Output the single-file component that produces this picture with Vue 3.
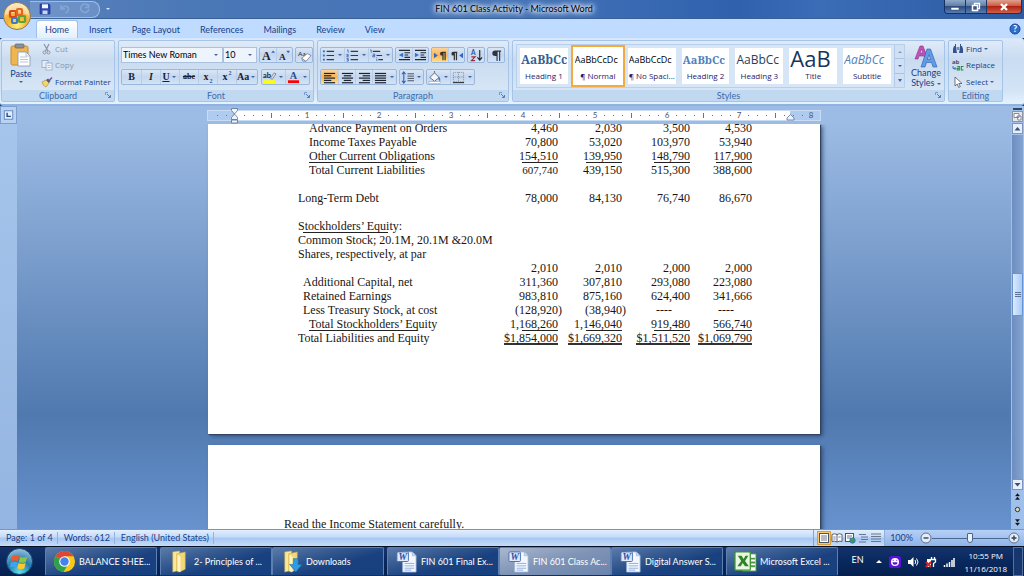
<template>
  <div class="word">
    <header class="title-bar">
      <div class="quick-access">
        <button v-for="q in quickButtons" :key="q" class="bare" :aria-label="q">
          <svg viewBox="0 0 12 12" class="ico-12" v-html="icons[q]"></svg>
        </button>
      </div>
      <button class="bare qa-more" aria-label="Customize"><i class="caret light"></i></button>
      <h1>FIN 601 Class Activity - Microsoft Word</h1>
      <div class="window-buttons">
        <button aria-label="Minimize"><svg viewBox="0 0 12 10"><rect x="2" y="5.500" width="8" height="2.500" fill="#fff" stroke="#344a6c" stroke-width=".5" /></svg></button>
        <button aria-label="Restore"><svg viewBox="0 0 12 10"><path d="M4.500 3V1.500h5v5H8" fill="none" stroke="#fff" stroke-width="1.300" /><rect x="2.500" y="3.500" width="5" height="5" fill="none" stroke="#fff" stroke-width="1.500" /></svg></button>
        <button class="close" aria-label="Close"><svg viewBox="0 0 12 10"><path d="M3 2l6 6M9 2L3 8" stroke="#fff" stroke-width="2.200" /></svg></button>
      </div>
    </header>

    <button class="office-orb" aria-label="Office">
      <svg viewBox="0 0 30 30">
        <defs>
          <radialGradient id="orb" cx=".5" cy=".85" r=".9">
            <stop offset="0" stop-color="#fff27a" />
            <stop offset=".45" stop-color="#f6ad2c" />
            <stop offset="1" stop-color="#fbe7b4" />
          </radialGradient>
        </defs>
        <circle cx="15" cy="15" r="13.500" fill="url(#orb)" stroke="#8d7a58" />
        <path d="M3 14a12 12 0 0 1 24 0q-12-5-24 0z" fill="#fff" opacity=".4" />
        <g fill="none" stroke-width="2.200">
          <rect x="8" y="10" width="6" height="6" rx="1" stroke="#d9481c" />
          <rect x="15" y="8" width="5" height="6" rx="1" stroke="#e8651f" />
          <rect x="10" y="17" width="5" height="5" rx="1" stroke="#3f79c9" />
          <rect x="17" y="15" width="6" height="6" rx="1" stroke="#5ea23a" />
        </g>
      </svg>
    </button>

    <nav class="tabs">
      <a v-for="tab in tabs" :key="tab" href="#" :class="{ active: tab === 'Home' }">{{ tab }}</a>
      <button class="bare help" aria-label="Help">
        <svg viewBox="0 0 12 12"><circle cx="6" cy="6" r="5" fill="#2f6fd0" stroke="#1d4690" /><text x="6" y="9" text-anchor="middle" font-size="9" font-weight="700" fill="#fff">?</text></svg>
      </button>
    </nav>

    <section class="ribbon">
      <div class="group clipboard">
        <div class="group-body">
          <button class="bare paste">
            <svg viewBox="0 0 22 24">
              <rect x="1" y="3" width="17" height="19" rx="1.500" fill="#efb54e" stroke="#c98c2c" />
              <rect x="5" y="1" width="9" height="4" rx="1" fill="#8a8f98" stroke="#5c6370" stroke-width=".7" />
              <path d="M8 9h8l4 4v10H8z" fill="#fff" stroke="#8795ad" stroke-width=".8" />
              <path d="M16 9v4h4M10 14h7M10 16.500h8M10 19h8" fill="none" stroke="#a9b7cc" stroke-width=".8" />
            </svg>
            Paste
            <i class="caret"></i>
          </button>
          <div class="stack">
            <button class="bare disabled"><svg viewBox="0 0 12 12" class="ico-12" v-html="icons.Cut"></svg>Cut</button>
            <button class="bare disabled"><svg viewBox="0 0 12 12" class="ico-12" v-html="icons.Copy"></svg>Copy</button>
            <button class="bare"><svg viewBox="0 0 12 12" class="ico-12" v-html="icons.Painter"></svg>Format Painter</button>
          </div>
        </div>
        <footer>Clipboard<svg class="launcher" viewBox="0 0 6 6" v-html="icons.Launcher"></svg></footer>
      </div>

      <div class="group font">
        <div class="group-body rows">
          <div class="tool-row">
            <div class="combos">
              <label class="combo wide"><select aria-label="Font"><option>Times New Roman</option><option>Calibri</option></select><i class="caret"></i></label>
              <label class="combo"><select aria-label="Font size"><option>10</option><option>12</option></select><i class="caret"></i></label>
            </div>
            <div class="tools">
              <button aria-label="Grow font"><svg viewBox="0 0 16 14" v-html="icons.Grow"></svg></button>
              <button aria-label="Shrink font"><svg viewBox="0 0 16 14" v-html="icons.Shrink"></svg></button>
            </div>
            <div class="tools">
              <button aria-label="Clear formatting"><svg viewBox="0 0 16 14" v-html="icons.Clear"></svg></button>
            </div>
          </div>
          <div class="tool-row">
            <div class="tools letters">
              <button><b>B</b></button>
              <button><em>I</em></button>
              <button class="drop"><u>U</u><i class="caret"></i></button>
              <button><s>abe</s></button>
              <button>x<sub>2</sub></button>
              <button>x<sup>2</sup></button>
              <button class="drop">Aa<i class="caret"></i></button>
            </div>
            <div class="tools">
              <button class="drop" aria-label="Highlight"><svg viewBox="0 0 16 14" v-html="icons.Highlight"></svg><i class="caret"></i></button>
              <button class="drop" aria-label="Font color"><svg viewBox="0 0 16 14" v-html="icons.Color"></svg><i class="caret"></i></button>
            </div>
          </div>
        </div>
        <footer>Font<svg class="launcher" viewBox="0 0 6 6" v-html="icons.Launcher"></svg></footer>
      </div>

      <div class="group paragraph">
        <div class="group-body rows">
          <div v-for="(row, r) in paragraphTools" :key="r" class="tool-row">
            <div v-for="(set, s) in row" :key="s" class="tools">
              <button v-for="t in set" :key="t.icon" :aria-label="t.icon" :class="{ drop: t.drop, on: t.on }">
                <svg viewBox="0 0 16 14" v-html="icons[t.icon]"></svg><i v-if="t.drop" class="caret"></i>
              </button>
            </div>
          </div>
        </div>
        <footer>Paragraph<svg class="launcher" viewBox="0 0 6 6" v-html="icons.Launcher"></svg></footer>
      </div>

      <div class="group styles">
        <div class="group-body">
          <div class="gallery">
            <button v-for="st in styleCells" :key="st.name" class="cell" :class="[st.kind, { picked: st.picked }]">
              <span class="sample">{{ st.sample }}</span>
              <span class="name">{{ st.name }}</span>
            </button>
            <div class="gallery-scroll">
              <button aria-label="Row up"><i class="caret up"></i></button>
              <button aria-label="Row down"><i class="caret"></i></button>
              <button aria-label="More"><i class="caret more"></i></button>
            </div>
          </div>
          <button class="bare change">
            <svg viewBox="0 0 24 24">
              <path d="M1 15L6 2h3l5 13h-3l-1-3H5l-1 3zM6 9h3L7.500 5z" fill="#c44fb6" stroke="#8d2f88" stroke-width=".6" />
              <path d="M7 23l6-18h3.500L23 23h-4l-1.500-4.500h-5L11 23zM13.500 15.500h3L15 10.500z" fill="#5f9be6" stroke="#2c5da8" stroke-width=".6" />
            </svg>
            <span>Change<br />Styles <i class="caret"></i></span>
          </button>
        </div>
        <footer>Styles<svg class="launcher" viewBox="0 0 6 6" v-html="icons.Launcher"></svg></footer>
      </div>

      <div class="group editing">
        <div class="group-body">
          <div class="stack">
            <button class="bare"><svg viewBox="0 0 12 12" class="ico-12" v-html="icons.Find"></svg>Find <i class="caret"></i></button>
            <button class="bare"><svg viewBox="0 0 12 12" class="ico-12" v-html="icons.Replace"></svg>Replace</button>
            <button class="bare"><svg viewBox="0 0 12 12" class="ico-12" v-html="icons.Select"></svg>Select <i class="caret"></i></button>
          </div>
        </div>
        <footer>Editing</footer>
      </div>
    </section>

    <main class="workspace">
      <div class="doc-side">
        <div class="ruler-row">
          <button class="tab-kind" aria-label="Left tab"><svg viewBox="0 0 16 16"><rect x="3.500" y="3.500" width="9" height="9" fill="#e4eefb" stroke="#5f86c0" /><path d="M6.500 5.500v4h4" fill="none" stroke="#234a86" stroke-width="1.500" /></svg></button>
          <div class="ruler">
            <svg viewBox="0 0 614 18">
              <rect x=".5" y="4.500" width="613" height="10" fill="#aecbf0" stroke="#c9dcf4" />
              <rect x="28" y="5" width="555" height="9" fill="#fff" />
              <template v-for="n in 67" :key="n">
                <rect v-if="tickAt(n) === 'half'" :x="n * 9 + 1" y="7" width="1" height="5" fill="#6b7480" />
                <rect v-else-if="tickAt(n) === 'dot'" :x="n * 9 + 1" y="9" width="1" height="1" fill="#6b7480" />
              </template>
              <text v-for="n in 8" :key="'n' + n" :x="n * 72 + 28" y="12" text-anchor="middle" font-size="8" fill="#4c5566">{{ n }}</text>
              <g fill="#eef4fd" stroke="#5c7296" stroke-width=".8">
                <path d="M24.500 2.500h6v2l-3 3.500-3-3.500z" />
                <path d="M24.500 13.500v-2l3-3.500 3 3.500v2z" />
                <path d="M24.500 14h6v3h-6z" />
                <path d="M580 14v-2l3.500-3.500L587 12v2z" />
              </g>
            </svg>
          </div>
        </div>
        <div class="canvas-row">
          <div class="side-strip"></div>
          <div class="canvas">
            <article class="page first">
              <table>
                <tbody>
                  <tr v-for="(row, i) in rows" :key="i">
                    <td :class="row.indent"><span :class="row.rule">{{ row.label }}</span></td>
                    <td v-for="(v, c) in row.values" :key="c" :class="cellClass(v)">
                      <span :class="[row.sums, { small: row.small && c === 0 }]">{{ v }}</span>
                    </td>
                  </tr>
                </tbody>
              </table>
            </article>
            <article class="page second">
              <p>Read the Income Statement carefully.</p>
            </article>
          </div>
        </div>
      </div>
      <div class="scroll-side">
        <div class="splitter"></div>
        <button aria-label="View ruler"><svg viewBox="0 0 11 11"><rect x=".5" y=".5" width="10" height="10" fill="#e6e6ee" stroke="#8b93a5" /><path d="M2 2.500h5v4H2zM5 5h4v4H6z" fill="#fff" stroke="#6a6f80" stroke-width=".8" /></svg></button>
        <button aria-label="Scroll up"><svg viewBox="0 0 11 11"><rect x=".5" y=".5" width="10" height="10" fill="#e8effa" stroke="#7e96bd" /><path d="M2.500 7.500l3-3.500 3 3.500z" fill="#3b4f78" /></svg></button>
        <div class="track"><div class="thumb"></div></div>
        <button aria-label="Scroll down"><svg viewBox="0 0 11 11"><rect x=".5" y=".5" width="10" height="10" fill="#e8effa" stroke="#7e96bd" /><path d="M2.500 4l3 3.500 3-3.500z" fill="#3b4f78" /></svg></button>
        <div class="browse">
          <button aria-label="Previous page"><svg viewBox="0 0 11 11"><path d="M3.500 5l2-2.500 2 2.500zM3.500 8.500l2-2.500 2 2.500z" fill="#111" stroke="#111" stroke-width=".4" /></svg></button>
          <button aria-label="Browse object"><svg viewBox="0 0 11 11"><circle cx="5.500" cy="5.500" r="2.200" fill="#d7d9c2" stroke="#333" /></svg></button>
          <button aria-label="Next page"><svg viewBox="0 0 11 11"><path d="M3.500 2.500l2 2.500 2-2.500zM3.500 6l2 2.500 2-2.500z" fill="#111" stroke="#111" stroke-width=".4" /></svg></button>
        </div>
      </div>
    </main>

    <div class="status-bar">
      <span>Page: 1 of 4</span>
      <span>Words: 612</span>
      <span>English (United States)</span>
      <div class="views">
        <button v-for="v in views" :key="v" class="bare" :class="{ on: v === 'PrintLayout' }" :aria-label="v">
          <svg viewBox="0 0 12 12" class="ico-12" v-html="icons[v]"></svg>
        </button>
      </div>
      <div class="zoom">
        <span id="zoom-label">100%</span>
        <button class="bare" aria-label="Zoom out"><svg viewBox="0 0 12 12" class="ico-12" v-html="icons.Minus"></svg></button>
        <input type="range" min="0" max="200" value="100" aria-labelledby="zoom-label" />
        <button class="bare" aria-label="Zoom in"><svg viewBox="0 0 12 12" class="ico-12" v-html="icons.Plus"></svg></button>
      </div>
    </div>

    <footer class="taskbar">
      <button class="bare start" aria-label="Start">
        <svg viewBox="0 0 30 30">
          <defs>
            <radialGradient id="start" cx=".5" cy=".9" r=".9">
              <stop offset="0" stop-color="#5fe0e8" />
              <stop offset=".5" stop-color="#2379ad" />
              <stop offset="1" stop-color="#9cc4de" />
            </radialGradient>
          </defs>
          <circle cx="15" cy="15" r="13.500" fill="url(#start)" stroke="#173c66" />
          <path d="M7.500 9.500q3.500-2 7 0l-1.200 5.500q-3.300-2-7 0z" fill="#ef5a28" />
          <path d="M15.500 10q3.500 1.800 7.500 0l-1.500 5.500q-3.500 1.800-7.200 0z" fill="#8cc63f" />
          <path d="M6 16q3.500-2 7 0l-1.200 5.500q-3.300-2-7 0z" fill="#3fa5ea" />
          <path d="M14 16.500q3.500 1.800 7.300 0L20 22q-3.500 1.800-7.300 0z" fill="#fdc82f" />
        </svg>
      </button>
      <div class="tasks">
        <button v-for="t in tasks" :key="t.label" :class="{ active: t.active, apart: t.apart }">
          <svg viewBox="0 0 24 24" v-html="icons[t.icon]"></svg>
          <span>{{ t.label }}</span>
        </button>
      </div>
      <div class="tray">
        <span class="lang">EN</span>
        <i class="caret up white"></i>
        <svg v-for="t in trayIcons" :key="t" viewBox="0 0 12 12" class="ico-12" v-html="icons[t]"></svg>
        <time>10:55 PM<br />11/16/2018</time>
        <button class="desktop" aria-label="Show desktop"></button>
      </div>
    </footer>
  </div>
</template>

<script setup>
const tabs = ["Home", "Insert", "Page Layout", "References", "Mailings", "Review", "View"];
const quickButtons = ["Save", "Undo", "Redo"];
const views = ["PrintLayout", "Reading", "WebLayout", "Outline", "Draft"];
const trayIcons = ["Smile", "Volume", "Power", "Signal"];

const lines = (widths, x = 2, anchor = "start") =>
  widths
    .map((w, i) => {
      const left = anchor === "middle" ? 8 - w / 2 : anchor === "end" ? 14 - w : x;
      return `<rect x="${left}" y="${2 + i * 2.5}" width="${w}" height="1.3" fill="#1c2230"/>`;
    })
    .join("");

const wordDoc =
  '<path d="M8 2h10l4 4v17H8z" fill="#f4f8fe" stroke="#9db4d8" stroke-width=".8"/><path d="M18 2v4h4" fill="#c9daf2" stroke="#9db4d8" stroke-width=".8"/><path d="M10 14h10M10 16.500h10M10 19h10M10 21h7" stroke="#8cb0e6" stroke-width="1"/><rect x="2" y="2" width="12" height="10" rx="1" fill="#dfe9fa" stroke="#4c6fb8"/><text x="8" y="10.500" text-anchor="middle" font-size="10" font-weight="700" font-style="italic" font-family="Liberation Serif, serif" fill="#2a4ea3">W</text>';
const folder =
  '<path d="M5 2l7-1v20l-7 2z" fill="#f9e79b" stroke="#d5b04a" stroke-width=".6"/><path d="M9 4l9-2v18l-6 3-3-1z" fill="#f3d878" stroke="#d0a840" stroke-width=".6"/><path d="M10 5l3 2v16l-3-1z" fill="#fff5c4"/>';

const icons = {
  Save: '<path d="M1 1h9l1 1v9H1z" fill="#2f49b4" stroke="#1b2c7c" stroke-width=".6"/><rect x="3" y="1.300" width="6" height="4" fill="#f0f5ff"/><rect x="3.500" y="7.500" width="5" height="3.500" fill="#c9d4ee"/>',
  Undo: '<path d="M2 2v4h4M2.500 5.500C5 2 10 3 9.500 6.500 9.300 8.500 8 9.500 6.500 10" fill="none" stroke="#86a6d6" stroke-width="1.500"/>',
  Redo: '<path d="M9 2.500A4.200 4.200 0 1 0 10 6M9.500 1v3.500H6" fill="none" stroke="#86a6d6" stroke-width="1.500"/>',
  Cut: '<path d="M3 1l4 7M8 1L4.500 8" stroke="#8a95a8" stroke-width="1.200"/><circle cx="3.500" cy="9.500" r="1.500" fill="none" stroke="#8a95a8"/><circle cx="7.500" cy="9.500" r="1.500" fill="none" stroke="#8a95a8"/>',
  Copy: '<rect x="1" y="1.500" width="6" height="7" fill="#e6edf7" stroke="#93a5c2" stroke-width=".8"/><rect x="5" y="4" width="6" height="7" fill="#f1f5fb" stroke="#93a5c2" stroke-width=".8"/><path d="M6.500 6.500h3M6.500 8.500h3" stroke="#93a5c2" stroke-width=".7"/>',
  Painter: '<path d="M1 6l4-2 3 3-3 4q-3-1-4-5z" fill="#f4d772" stroke="#b08e2e" stroke-width=".7"/><path d="M5 4l2-1.500L9.500 5 8 7z" fill="#555c70"/><path d="M8 3.500L10.500 1l1 1L9.200 4.800z" fill="#7b56b0"/>',
  Launcher: '<path d="M.5 3V.5H3" fill="none" stroke="#6a8bbd" stroke-width=".8"/><path d="M2 2l3 3M5.500 3v2.500H3" fill="none" stroke="#4d72aa" stroke-width=".9"/>',
  Grow: '<text x="1" y="12" font-size="13" font-weight="700" font-family="Liberation Serif, serif" fill="#1f2430">A</text><path d="M11 4l2-2.500L15 4z" fill="#3863b0"/>',
  Shrink: '<text x="2" y="12" font-size="10" font-weight="700" font-family="Liberation Serif, serif" fill="#1f2430">A</text><path d="M10 2h4l-2 2.500z" fill="#3863b0"/>',
  Clear: '<text x="1" y="7" font-size="7" fill="#222">Aa</text><path d="M5 10l6-5 4 2-5 6H6z" fill="#fff" stroke="#7c7f95" stroke-width=".9"/><path d="M5 10l4 3" stroke="#7c7f95"/>',
  Highlight: '<text x="1" y="8" font-size="8" font-weight="700" fill="#222">ab</text><path d="M9 8l4-6 2 1-4 6z" fill="#d8dfea" stroke="#60697c" stroke-width=".7"/><rect x="2" y="10" width="12" height="3" fill="#ff0"/>',
  Color: '<text x="8" y="9" text-anchor="middle" font-size="11" font-weight="700" font-family="Liberation Serif, serif" fill="#2b4f90">A</text><rect x="2" y="10" width="12" height="3" fill="#f00"/>',
  Bullets: '<g fill="#3c68b2"><rect x="2" y="1.500" width="2" height="2"/><rect x="2" y="6" width="2" height="2"/><rect x="2" y="10.500" width="2" height="2"/></g><path d="M6 2.500h8M6 7h8M6 11.500h8" stroke="#333b4c" stroke-width="1.200"/>',
  Numbering: '<path d="M2 1h1.300v3M1.500 6h2v1.200h-1.500V8.500h2M1.500 10.300h2v1.200h-1.500M3.500 11.500V13h-2" fill="none" stroke="#3c68b2" stroke-width=".9"/><path d="M6 2.500h8M6 7h8M6 11.500h8" stroke="#333b4c" stroke-width="1.200"/>',
  Multilevel: '<path d="M1 1h1.300v3M4 5.500h2v3H4V7h2M8.300 10.500V13M8.300 9v.8" fill="none" stroke="#3c68b2" stroke-width=".9"/><path d="M4 2.500h8M8 7h6M10 11.500h5" stroke="#333b4c" stroke-width="1.200"/>',
  Outdent: '<path d="M2 1.500h12M8 4h6M8 6.500h4M8 9h6M2 11.500h12" stroke="#222a38" stroke-width="1.200"/><path d="M6.500 4v5L2 6.500z" fill="#3b6fce"/>',
  Indent: '<path d="M2 1.500h12M8 4h6M8 6.500h4M8 9h6M2 11.500h12" stroke="#222a38" stroke-width="1.200"/><path d="M2 4v5l4.500-2.500z" fill="#3b6fce"/>',
  LeftToRight: '<path d="M1 4v6l4-3z" fill="#2f63c8"/><path d="M14 3H9.500a2 2 0 0 0 0 4H10v5h1.300V4.300h1V12h1.300V4.300z" fill="#333"/>',
  RightToLeft: '<path d="M15 4v6l-4-3z" fill="#2f63c8"/><path d="M9 3H4.500a2 2 0 0 0 0 4H5v5h1.300V4.300h1V12h1.300V4.300z" fill="#333"/>',
  Sort: '<text x="2" y="6.500" font-size="7" font-weight="700" fill="#2b4fa0">A</text><path d="M2.500 8.500h4l-4 4h4" fill="none" stroke="#9a2b3e" stroke-width="1.200"/><path d="M11.500 1v10M9 9l2.500 3L14 9" fill="none" stroke="#222" stroke-width="1.200"/>',
  Marks: '<path d="M13 1.500H6.500a3 3 0 0 0 0 6H8V13h1.200V3h1.600v10H12V3h1z" fill="#30343e"/>',
  AlignLeft: lines([12, 8, 12, 8, 12]),
  AlignCenter: lines([12, 8, 12, 8, 12], 2, "middle"),
  AlignRight: lines([12, 8, 12, 8, 12], 2, "end"),
  Justify: lines([12, 12, 12, 12, 12]),
  Spacing: '<path d="M4 1v12M2 3.500L4 1l2 2.500M2 10.500L4 13l2-2.500" fill="none" stroke="#2f63b8" stroke-width="1.200"/><path d="M8 3h7M8 5.500h7M8 8h7M8 10.500h7" stroke="#444c5c" stroke-width="1"/>',
  Shading: '<path d="M3 7l5-5 5 5-5 4z" fill="#f3f6fb" stroke="#59657c"/><path d="M8 2V0" stroke="#59657c"/><path d="M12 6q3 2 2 5-2-1-2-5z" fill="#3b73cf"/><rect x="2" y="11.500" width="12" height="2" fill="#fff" stroke="#8592a8" stroke-width=".5"/>',
  Borders: '<path d="M2.500 1.500h11v10h-11zM8 1.500v10M2.500 6.500h11" fill="none" stroke="#7e8796" stroke-dasharray="1 1"/><path d="M2 12.500h12" stroke="#333" stroke-width="1.200"/>',
  Find: '<path d="M2 3h2v2l1 5H1V6zM8 3h2l1 3v4H7l1-5z" fill="#33528e"/><rect x="4.500" y="4" width="3" height="3" fill="#6f8fc4"/><path d="M3 1h1v2H3zM8 1h1v2H8z" fill="#33528e"/>',
  Replace: '<text x="0" y="5" font-size="6" font-weight="700" fill="#4a4f60">ab</text><path d="M1 7v2.500h2.500M2.500 8l1.500 1.500L2.500 11" fill="none" stroke="#3863b0" stroke-width=".9"/><path d="M5.300 7.500h2v3.500h-2V9.300h2M11.500 7.500H9.300V11h2.200" fill="none" stroke="#2c8a3e" stroke-width="1.100"/>',
  Select: '<path d="M3 1v9l2.200-2 1.500 3.500 1.600-.8L6.800 7.500H10z" fill="#fff" stroke="#4d5668" stroke-width=".8"/>',
  PrintLayout: '<rect x="1.500" y="1.500" width="9" height="9" fill="#fff" stroke="#4a5568"/><path d="M3 4h6M3 6h6M3 8h6" stroke="#4a5568" stroke-width=".8"/>',
  Reading: '<path d="M1 2.500q2.500-1.500 5 0 2.500-1.500 5 0V9.500q-2.500-1-5 .500-2.500-1.500-5-.5zM6 2.500V10" fill="#fff" stroke="#4a5568" stroke-width=".9"/><path d="M2.300 5h2.400M7.300 5h2.400M2.300 7h2.400" stroke="#4a5568" stroke-width=".7"/>',
  WebLayout: '<rect x="1.500" y="1.500" width="8" height="8" fill="#fff" stroke="#4a5568"/><path d="M3 4h5M3 6h4" stroke="#4a5568" stroke-width=".8"/><circle cx="8.500" cy="8.500" r="2.700" fill="#3c9a68" stroke="#2a64b8" stroke-width=".7"/>',
  Outline: '<path d="M2 2.500h7M4 5h7M4 7.500h7M2 10h7" stroke="#68778f" stroke-width="1.100"/>',
  Draft: '<path d="M1 2h10M1 4.500h10M1 7h10M1 9.500h10" stroke="#68778f" stroke-width="1.200"/>',
  Minus: '<circle cx="6" cy="6" r="5" fill="#e3edfa" stroke="#5f6f8c"/><path d="M3.500 6h5" stroke="#333f58" stroke-width="1.400"/>',
  Plus: '<circle cx="6" cy="6" r="5" fill="#e3edfa" stroke="#5f6f8c"/><path d="M3.500 6h5M6 3.500v5" stroke="#333f58" stroke-width="1.400"/>',
  Chrome: '<circle cx="12" cy="12" r="11" fill="#fbc816"/><path d="M12 12L2.500 6.500A11 11 0 0 1 21.500 6.500H12z" fill="#e04434"/><path d="M12 12L2.500 6.500A11 11 0 0 0 11 23l5-8.500z" fill="#2da14d"/><circle cx="12" cy="12" r="5.500" fill="#fff"/><circle cx="12" cy="12" r="4.400" fill="#4682ee"/>',
  Folder: folder,
  Downloads: folder + '<path d="M14 9h5v6h4l-6.500 8L10 15h4z" fill="#2f9be2" stroke="#146cae" stroke-width=".6"/>',
  Word: wordDoc,
  Excel: '<rect x="9" y="4" width="14" height="18" fill="#fff" stroke="#3f8f36"/><path d="M16 9h6M16 13h6M16 17h6" stroke="#4d9b40" stroke-width="2"/><rect x="1" y="2" width="16" height="19" rx="1" fill="#e9f6e2" stroke="#3c9132" stroke-width="1.300"/><path d="M4 6h4l2 3.500L12 6h3l-3.500 5.500L15.500 17h-4L9 13.500 7 17H3.500l4-5.500z" fill="#2f8428"/>',
  Smile: '<rect width="12" height="12" rx="2.500" fill="#5b12d6"/><circle cx="6" cy="6" r="4" fill="#fff"/><path d="M3.500 6.300h5a2.500 2.500 0 0 1-5 0z" fill="#5b12d6"/><path d="M4.200 3.800v1M7.800 3.800v1" stroke="#5b12d6"/>',
  Volume: '<path d="M1 4h2.500L6.500 1v10l-3-3H1z" fill="#fff"/><path d="M8 4q1.500 2 0 4M9.500 2.500q3 3.500 0 7" fill="none" stroke="#fff"/>',
  Power: '<path d="M2 3h4v8H2z" fill="#fff"/><path d="M6.500 1v2M9.500 1v2M5.500 3.500h5v2.500l-2 1.500V11" fill="none" stroke="#fff" stroke-width="1.300"/><path d="M1 6l5 5M6 6l-5 5" stroke="#e3201c" stroke-width="2"/>',
  Signal: '<path d="M1.500 11V9M4 11V7.500M6.500 11V6M9 11V4M11 11V2" stroke="#fff" stroke-width="1.500"/>'
};

const paragraphTools = [
  [
    [{ icon: "Bullets", drop: true }, { icon: "Numbering", drop: true }, { icon: "Multilevel", drop: true }],
    [{ icon: "Outdent" }, { icon: "Indent" }],
    [{ icon: "LeftToRight", on: true }, { icon: "RightToLeft" }],
    [{ icon: "Sort" }],
    [{ icon: "Marks" }]
  ],
  [
    [{ icon: "AlignLeft", on: true }, { icon: "AlignCenter" }, { icon: "AlignRight" }, { icon: "Justify", drop: true }],
    [{ icon: "Spacing", drop: true }],
    [{ icon: "Shading", drop: true }, { icon: "Borders", drop: true }]
  ]
];

const styleCells = [
  { name: "Heading 1", sample: "AaBbCc", kind: "h-one" },
  { name: "¶ Normal", sample: "AaBbCcDc", kind: "plain", picked: true },
  { name: "¶ No Spaci...", sample: "AaBbCcDc", kind: "plain" },
  { name: "Heading 2", sample: "AaBbCc", kind: "h-two" },
  { name: "Heading 3", sample: "AaBbCc", kind: "h-three" },
  { name: "Title", sample: "AaB", kind: "title" },
  { name: "Subtitle", sample: "AaBbCc", kind: "subtitle" }
];

const blank = ["", "", "", ""];
const rows = [
  { label: "Advance Payment on Orders", indent: "in-two", values: ["4,460", "2,030", "3,500", "4,530"] },
  { label: "Income Taxes Payable", indent: "in-two", values: ["70,800", "53,020", "103,970", "53,940"] },
  { label: "Other Current Obligations", indent: "in-two", rule: "rule", sums: "sum", values: ["154,510", "139,950", "148,790", "117,900"] },
  { label: "Total Current Liabilities", indent: "in-two", small: true, values: ["607,740", "439,150", "515,300", "388,600"] },
  { label: "", values: blank },
  { label: "Long-Term Debt", values: ["78,000", "84,130", "76,740", "86,670"] },
  { label: "", values: blank },
  { label: "Stockholders’ Equity:", rule: "rule short", values: blank },
  { label: "Common Stock; 20.1M, 20.1M &20.0M", values: blank },
  { label: "Shares, respectively, at par", values: blank },
  { label: "", values: ["2,010", "2,010", "2,000", "2,000"] },
  { label: "Additional Capital, net", indent: "in-one", values: ["311,360", "307,810", "293,080", "223,080"] },
  { label: "Retained Earnings", indent: "in-one", values: ["983,810", "875,160", "624,400", "341,666"] },
  { label: "Less Treasury Stock, at cost", indent: "in-one", values: ["(128,920)", "(38,940)", "----", "----"] },
  { label: "Total Stockholders’ Equity", indent: "in-two", rule: "rule", sums: "sum", values: ["1,168,260", "1,146,040", "919,480", "566,740"] },
  { label: "Total Liabilities and Equity", sums: "grand", values: ["$1,854,000", "$1,669,320", "$1,511,520", "$1,069,790"] }
];

const tasks = [
  { label: "BALANCE SHEE...", icon: "Chrome" },
  { label: "2- Principles of ...", icon: "Folder", apart: true },
  { label: "Downloads", icon: "Downloads" },
  { label: "FIN 601 Final Ex...", icon: "Word", apart: true },
  { label: "FIN 601 Class Ac...", icon: "Word", active: true },
  { label: "Digital Answer S...", icon: "Word" },
  { label: "Microsoft Excel ...", icon: "Excel", apart: true }
];

function cellClass(value) {
  if (value.endsWith(")")) {
    return "negative";
  }
  return value === "----" ? "dash" : "";
}

// eight ticks to the inch, origin at the third tick; whole inches carry a number
function tickAt(n) {
  const step = (n - 3 + 8) % 8;
  if (step === 0) {
    return "inch";
  }
  return step === 4 ? "half" : "dot";
}
</script>

<style>
body {
  margin: 0;
  background: #0b2a5c;
}
</style>

<style scoped>
.word {
  position: relative;
  display: flex;
  flex-direction: column;
  height: 100vh;
  overflow: hidden;
  font-family: Lato, "Open Sans", sans-serif;
  font-size: 9px;
  line-height: 10px;
  color: #15428b;
}

.word *,
.word *::after {
  box-sizing: border-box;
}

button {
  font: inherit;
  color: inherit;
  padding: 0;
  margin: 0;
  border: 0;
  background: none;
}

svg {
  display: block;
  flex: none;
}

.ico-12 {
  width: 12px;
  height: 12px;
}

.bare {
  display: flex;
  align-items: center;
  white-space: nowrap;
}

.caret {
  display: inline-block;
  flex: none;
  width: 0;
  height: 0;
  border: 2px solid transparent;
  border-top: 2px solid #41659f;
  border-bottom: 0;
  vertical-align: middle;
}

.caret.up {
  border-top: 0;
  border-bottom: 2px solid #8a97ac;
}

.caret.light {
  border-top-color: #dbe7f8;
}

.caret.white {
  border-bottom: 3px solid #fff;
  border-left-width: 3px;
  border-right-width: 3px;
}

.caret.more {
  border-top-width: 3px;
}

/* title bar */
.title-bar {
  display: flex;
  align-items: center;
  height: 19px;
  flex: none;
  border-bottom: 1px solid #3a6196;
  background: linear-gradient(90deg, #5b83bd, #4a77b6 20%, #4573b8 50%, #2f61ad 72%, #3b6cb6 80%, #2c5ba3);
}

.quick-access {
  display: flex;
  align-items: center;
  gap: 8px;
  height: 17px;
  margin-left: 30px;
  padding: 0 8px 0 9px;
  border: 1px solid #a3bde2;
  border-left: 0;
  border-radius: 0 8px 8px 0;
  background: rgba(130, 163, 211, 0.5);
}

.qa-more {
  margin-left: 6px;
}

h1 {
  flex: 1;
  margin: 0;
  padding-right: 26px;
  font-size: 9px;
  font-weight: 400;
  text-align: center;
  color: #000;
  text-shadow: 0 0 4px #fff, 0 0 5px #fff, 0 0 7px #dfeaf8, 0 0 9px #cfdff3;
}

.window-buttons {
  display: flex;
  align-self: flex-start;
  margin-right: 2px;
  height: 14px;
  border: 1px solid #16305f;
  border-top: 0;
  border-radius: 0 0 4px 4px;
  overflow: hidden;
}

.window-buttons button {
  display: grid;
  place-items: center;
  width: 21px;
  border-right: 1px solid #1d3663;
  background: linear-gradient(#8fa9cf, #62809f 45%, #2f4d82 50%, #587cb0);
}

.window-buttons .close {
  width: 34px;
  border-right: 0;
  background: linear-gradient(#e0a08f, #cc5b45 45%, #ae2411 50%, #d0604a);
}

.window-buttons svg {
  width: 12px;
  height: 10px;
}

.office-orb {
  position: absolute;
  top: 1px;
  left: 2px;
  width: 30px;
  height: 30px;
}

/* tabs */
.tabs {
  display: flex;
  align-items: stretch;
  flex: none;
  height: 19px;
  padding-left: 36px;
  background: #bfdbff;
}

.tabs a {
  display: flex;
  align-items: center;
  padding: 1px 8px 0;
  margin-right: 2px;
  color: #15428b;
  text-decoration: none;
  border: 1px solid transparent;
  border-bottom: 0;
}

.tabs a.active {
  margin-top: 1px;
  border-color: #9fc0ea;
  border-radius: 3px 3px 0 0;
  background: linear-gradient(#fff, #e4effb);
}

.help {
  margin-left: auto;
  padding-right: 3px;
}

.help svg {
  width: 12px;
  height: 12px;
}

/* ribbon */
.ribbon {
  display: flex;
  gap: 3px;
  flex: none;
  height: 68px;
  padding: 1px 1px 2px;
  border-top: 1px solid #d6e6fa;
  border-bottom: 2px solid #8fb2e0;
  border-radius: 3px;
  background: linear-gradient(#dbe8f8, #c9dcf2 30%, #d3e4f6 80%, #e3f3fd);
}

.group {
  display: flex;
  flex-direction: column;
  min-width: 0;
  border: 1px solid #a6c3e8;
  border-radius: 2px;
  background: linear-gradient(#e0ebf8, #cfdff2 25%, #c9dbf0 30%, #dceaf8);
}

.group-body {
  display: flex;
  flex: 1;
  min-height: 0;
}

.group footer {
  display: flex;
  align-items: center;
  justify-content: center;
  position: relative;
  flex: none;
  height: 11px;
  color: #3e6aaa;
  background: #c1d8f1;
}

.launcher {
  position: absolute;
  right: 3px;
  top: 2px;
  width: 6px;
  height: 6px;
}

.clipboard {
  flex: 0 0 114px;
}

.font {
  flex: 0 0 196px;
}

.paragraph {
  flex: 0 0 192px;
}

.styles {
  flex: 0 1 433px;
}

.editing {
  flex: 0 0 55px;
}

.paste {
  flex-direction: column;
  width: 38px;
  padding-top: 2px;
  gap: 2px;
}

.paste svg {
  width: 22px;
  height: 24px;
}

.stack {
  display: flex;
  flex-direction: column;
  justify-content: space-around;
  padding-left: 1px;
  font-family: "Open Sans", sans-serif;
  font-size: 8px;
}

.stack .bare {
  gap: 2px;
  height: 14px;
}

.editing .stack {
  padding-left: 3px;
}

.disabled {
  color: #8b95a5;
}

.rows {
  flex-direction: column;
  gap: 6px;
  padding: 6px 3px 0 2px;
}

.tool-row {
  display: flex;
  justify-content: space-between;
  gap: 2px;
}

.paragraph .tool-row {
  justify-content: flex-start;
}

.tools {
  display: flex;
  height: 16px;
  border: 1px solid #9ab7de;
  border-radius: 2px;
  background: linear-gradient(#d9e6f5, #c4d7ef 50%, #d4e3f5);
}

.tools button {
  display: flex;
  align-items: center;
  justify-content: center;
  min-width: 16px;
  gap: 1px;
}

.paragraph .tool-row:last-child button {
  min-width: 17px;
}

.tools button + button {
  border-left: 1px solid #b7cde9;
}

.tools svg {
  width: 15px;
  height: 13px;
}

.tools .drop {
  padding-right: 2px;
  gap: 2px;
}

.tools .on {
  background: linear-gradient(#fbd39a, #f9b654 50%, #fde38e);
}

.letters {
  font-family: "Liberation Serif", serif;
  font-size: 10px;
  font-weight: 700;
  color: #1b2130;
}

.letters button {
  min-width: 19px;
}

.letters s {
  font-size: 8px;
}

.letters sub,
.letters sup {
  font-size: 6px;
  line-height: 6px;
  color: #2c58a8;
}

.letters sub {
  align-self: flex-end;
}

.letters sup {
  align-self: flex-start;
}

.combos {
  display: flex;
}

.combo {
  display: flex;
  align-items: center;
  width: 34px;
  height: 16px;
  padding-right: 4px;
  border: 1px solid #abc1de;
  background: #eef4fb;
}

.combo.wide {
  width: 102px;
}

.combo select {
  flex: 1;
  min-width: 0;
  padding: 0 1px;
  border: 0;
  appearance: none;
  background: none;
  font: inherit;
  color: #000;
}

/* style gallery */
.gallery {
  display: flex;
  flex: 1;
  min-width: 0;
  margin: 3px 3px 2px;
  border: 1px solid #b9d0ed;
  background: #d7e6f7;
}

.cell {
  display: flex;
  flex-direction: column;
  flex: 1 1 0;
  min-width: 0;
  margin: 2px;
  padding: 1px 1px 3px;
  border: 1px solid transparent;
  background: #fff;
  background-clip: padding-box;
  overflow: hidden;
}

.cell.picked {
  margin: 0;
  padding: 2px 2px 4px;
  border: 2px solid #f2ab3e;
}

.sample {
  display: flex;
  align-items: center;
  justify-content: flex-start;
  flex: 1;
  width: 100%;
  min-height: 0;
  overflow: hidden;
  white-space: nowrap;
  color: #000;
  font-family: "Open Sans", sans-serif;
  font-size: 9px;
}

.name {
  width: 100%;
  font-family: "Open Sans", sans-serif;
  font-size: 8px;
  text-align: center;
  white-space: nowrap;
  color: #1e1a6b;
}

.h-one .sample,
.h-two .sample {
  font-family: "Noto Serif", "DejaVu Serif", "Liberation Serif", serif;
  font-weight: 700;
  font-size: 12px;
  color: #365f91;
}

.h-two .sample {
  font-size: 11px;
  color: #4f81bd;
}

.h-three .sample {
  font-size: 12px;
  color: #243f60;
}

.title .sample {
  align-items: flex-start;
  font-size: 22px;
  line-height: 18px;
  color: #17365d;
}

.subtitle .sample {
  font-size: 12px;
  font-style: italic;
  color: #4f81bd;
}

.gallery-scroll {
  display: flex;
  flex-direction: column;
  width: 10px;
  border-left: 1px solid #b3cbe9;
}

.gallery-scroll button {
  flex: 1;
  display: grid;
  place-items: center;
  background: #cfe0f5;
}

.gallery-scroll button + button {
  border-top: 1px solid #a9c3e4;
}

.change {
  flex-direction: column;
  width: 36px;
  padding-top: 3px;
  line-height: 10px;
}

.change svg {
  width: 24px;
  height: 24px;
}

/* workspace */
.workspace {
  display: flex;
  flex: 1;
  min-height: 0;
}

.doc-side {
  display: flex;
  flex-direction: column;
  flex: 1;
  min-width: 0;
}

.ruler-row {
  display: flex;
  flex: none;
  height: 18px;
  background: #9cbce5;
}

.tab-kind {
  width: 17px;
  height: 18px;
  border: 1px solid #7d9fd0;
  background: #b9d2f1;
}

.tab-kind svg {
  width: 15px;
  height: 16px;
}

.ruler {
  flex: 1;
  display: flex;
  justify-content: center;
}

.ruler svg {
  width: 614px;
  height: 18px;
}

.canvas-row {
  display: flex;
  flex: 1;
  min-height: 0;
}

.side-strip {
  flex: 0 0 17px;
  background: linear-gradient(#a6c5ec, #94b5e1);
}

.canvas {
  display: flex;
  flex-direction: column;
  align-items: center;
  gap: 11px;
  flex: 1;
  overflow: hidden;
  background: linear-gradient(#9cbbe4, #5079af 72%, #6792cd);
}

.page {
  width: 100%;
  max-width: 612px;
  background: #fff;
  box-shadow: 1px 1px 1px #33445e, 3px 2px 4px rgba(30, 50, 90, 0.6);
  font-family: "Liberation Serif", serif;
  font-size: 12px;
  line-height: 14px;
  color: #1a1512;
}

.first {
  flex: none;
  padding: 0 68px 89px 90px;
}

.second {
  flex: 1;
  padding: 72px 76px 0;
}

.second p {
  margin: 0;
}

table {
  width: 100%;
  margin-top: -3px;
  border-collapse: collapse;
  table-layout: fixed;
}

td {
  width: 64px;
  height: 14px;
  padding: 0;
  text-align: right;
  white-space: nowrap;
}

td:first-child {
  width: 196px;
  text-align: left;
}

td:nth-child(4) {
  width: 68px;
}

td:nth-child(5) {
  width: 62px;
}

td span {
  display: inline-block;
  height: 14px;
  vertical-align: top;
}

td.in-one {
  padding-left: 5px;
}

td.in-two {
  padding-left: 11px;
}

td.negative span {
  margin-right: -4px;
}

td.dash {
  padding-right: 18px;
}

.rule {
  background: linear-gradient(#222, #222) left bottom / 108px 1px no-repeat;
}

.rule.short {
  background-position: 5px bottom;
  background-size: 85px 1px;
}

.sum {
  background: linear-gradient(#222, #222) right bottom / 36px 1px no-repeat;
}

.grand {
  border-bottom: 2px solid #333;
}

.small {
  font-size: 11px;
}

/* vertical scroll bar */
.scroll-side {
  display: flex;
  flex-direction: column;
  align-items: center;
  width: 13px;
  background: #9fc0ea;
}

.scroll-side button svg {
  width: 11px;
  height: 11px;
}

.splitter {
  width: 9px;
  height: 2px;
  margin: 2px 0 1px;
  background: #35465f;
}

.scroll-side > button {
  margin-bottom: 1px;
}

.track {
  flex: 1;
  width: 11px;
  padding-top: 138px;
  background: linear-gradient(90deg, #6c8dbf, #84a4d2);
}

.thumb {
  height: 43px;
  border: 1px solid #6a94d0;
  border-radius: 1px;
  background: linear-gradient(#5d7294, #5d7294) center 18px / 6px 1px no-repeat,
    linear-gradient(#5d7294, #5d7294) center 20px / 6px 1px no-repeat,
    linear-gradient(#5d7294, #5d7294) center 22px / 6px 1px no-repeat,
    linear-gradient(90deg, #dceafd, #a9cbf8);
}

.browse {
  display: flex;
  flex-direction: column;
  gap: 2px;
  padding-bottom: 1px;
}

/* status bar */
.status-bar {
  display: flex;
  align-items: center;
  flex: none;
  height: 17px;
  border-top: 1px solid #6f97cf;
  background: linear-gradient(#e3effd, #c3dafa 45%, #a6c6f2 50%, #c6dcf8);
}

.status-bar > span {
  padding: 1px 4px 1px 6px;
  border-right: 1px solid #93b3de;
}

.views {
  display: flex;
  align-items: center;
  gap: 1px;
  margin-left: auto;
  height: 100%;
  padding: 0 2px 0 4px;
  border-left: 1px solid #7fa3d8;
}

.views .on {
  background: #fbc873;
  outline: 1px solid #d99f3f;
}

.zoom {
  display: flex;
  align-items: center;
  height: 100%;
  padding: 0 4px 0 5px;
  border-left: 1px solid #8fb0dd;
  background: linear-gradient(#b5d0f5, #8fb4e8);
}

.zoom .bare:first-of-type {
  margin-left: 7px;
}

.zoom input {
  width: 76px;
  height: 12px;
  margin: 0;
  appearance: none;
  background: linear-gradient(#4b6896, #4b6896) center / 100% 1px no-repeat;
}

.zoom input::-webkit-slider-thumb {
  appearance: none;
  width: 6px;
  height: 10px;
  border: 1px solid #4d6489;
  border-radius: 1px 1px 3px 3px;
  background: #e9f1fc;
}

/* taskbar */
.taskbar {
  display: flex;
  flex: none;
  height: 30px;
  border-top: 1px solid #050f24;
  background: linear-gradient(#14336b, #0a2a60 40%, #05204f);
  color: #fff;
}

.start {
  width: 45px;
  padding-left: 5px;
}

.start svg {
  width: 29px;
  height: 29px;
}

.tasks {
  display: flex;
  flex: 1;
  min-width: 0;
}

.tasks button {
  display: flex;
  align-items: center;
  gap: 3px;
  flex: 0 1 112px;
  min-width: 0;
  padding-left: 7px;
  border: 1px solid #5d7fb2;
  border-bottom-color: #10306a;
  border-radius: 2px;
  background: linear-gradient(165deg, #5b7cab, #33588f 35%, #1a417f 60%, #17407f);
}

.tasks .apart {
  margin-left: 3px;
}

.tasks .active {
  background: linear-gradient(165deg, #a9b8ce, #7e93b5 50%, #6b84ad);
}

.tasks svg {
  width: 23px;
  height: 23px;
}

.tasks span {
  overflow: hidden;
  white-space: nowrap;
}

.tray {
  display: flex;
  align-items: center;
  gap: 6px;
}

.lang {
  align-self: flex-start;
  padding: 8px 6px 0 0;
}

.tray .caret {
  margin-right: 1px;
}

.tray time {
  margin: 0 0 0 4px;
  font-family: "Open Sans", sans-serif;
  font-size: 8px;
  text-align: center;
  line-height: 13px;
}

.desktop {
  align-self: stretch;
  width: 10px;
  margin-right: 1px;
  border: 1px solid #54719f;
  background: #17366d;
}
</style>
